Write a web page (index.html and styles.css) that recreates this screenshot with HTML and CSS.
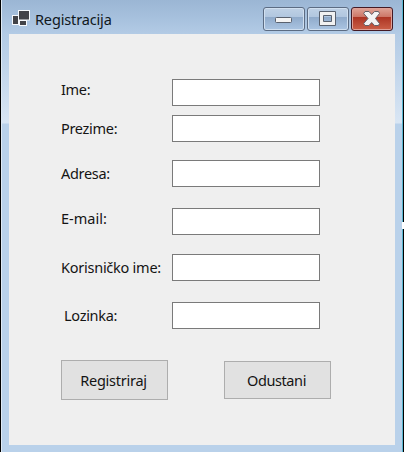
FILE: index.html
```html
<!DOCTYPE html>
<html lang="hr">
<head>
<meta charset="utf-8">
<title>Registracija</title>
<link rel="stylesheet" href="styles.css">
</head>
<body>
<div class="window">
  <header class="titlebar">
    <svg class="app-icon" width="18" height="17" viewBox="0 0 18 17">
      <g fill="#424348" stroke="#f5f8fb" stroke-width="1">
        <rect x=".5" y="5.500" width="6" height="9"/>
        <rect x="7.5" y="10.500" width="7" height="5"/>
        <rect x="6.500" y=".5" width="11" height="9.500"/>
      </g>
    </svg>
    <h1 class="title">Registracija</h1>
    <div class="controls">
      <button class="control" aria-label="Minimize">
        <svg width="18" height="18" viewBox="0 0 18 18"><rect x=".5" y="7.500" width="16" height="5" rx="1" fill="#f3f3f3" stroke="#59616e"/></svg>
      </button>
      <button class="control" aria-label="Maximize">
        <svg width="18" height="18" viewBox="0 0 18 18"><path d="M.5 1.500h16v14h-16zM4.500 5.500v6h8v-6z" fill="#f1f1f1" fill-rule="evenodd" stroke="#59616e"/></svg>
      </button>
      <button class="control close" aria-label="Close">
        <svg width="18" height="18" viewBox="0 0 18 18"><path d="M2 1.500h4L8.700 4.500 11.500 1.500H15.500L16.500 3.500 12.500 8.500 16.500 13.500 15.500 15.500H11.500L8.700 12.500 6 15.500H2L.7 13.500 5 8.500.7 3.500z" fill="#f3f3f3" stroke="#656067"/></svg>
      </button>
    </div>
  </header>
  <main class="client">
    <form class="form">
      <div class="row"><label class="label ime" for="ime">Ime:</label><input class="field" id="ime"></div>
      <div class="row prezime"><label class="label" for="prezime">Prezime:</label><input class="field" id="prezime"></div>
      <div class="row adresa"><label class="label" for="adresa">Adresa:</label><input class="field" id="adresa"></div>
      <div class="row email"><label class="label" for="email">E-mail:</label><input class="field" id="email"></div>
      <div class="row username"><label class="label" for="username">Korisničko ime:</label><input class="field" id="username"></div>
      <div class="row password"><label class="label" for="password">Lozinka:</label><input class="field" id="password" type="password"></div>
      <div class="actions">
        <button class="action submit" type="button">Registriraj</button>
        <button class="action cancel" type="button">Odustani</button>
      </div>
    </form>
  </main>
  <span class="edge-mark"></span>
</div>
</body>
</html>
```

FILE: styles.css
```css
* { box-sizing: border-box; }

body {
  margin: 0;
  overflow: hidden;
  font-family: "Noto Sans", "Open Sans", sans-serif;
  font-size: 14.5px;
  color: #141414;
}

.window {
  position: relative;
  width: 404px;
  height: 452px;
  padding: 0 7px 7px;
  border-left: 1px solid #000;
  border-right: 1px solid #000;
  box-shadow: inset 1px 0 #dfeaf5, inset -1px 0 #58b6d0;
  background: linear-gradient(#9bb6d4 0, #a8c2de 20px, #b3cbe5 34px, #bdd2e9 60px, #d9e6f4 123px, #b9d1ea 124px);
}

.titlebar {
  display: flex;
  height: 34px;
  padding: 7px 3px 0 4px;
}

.app-icon { margin-top: 3px; }

.title {
  margin: 1px 0 0 5px;
  font-size: 14.5px;
  font-weight: 400;
  line-height: 23px;
  letter-spacing: -.15px;
  color: #101820;
}

.controls {
  display: flex;
  gap: 2px;
  margin-left: auto;
}

.control {
  display: grid;
  place-items: center;
  width: 42px;
  height: 24px;
  padding: 0;
  border: 1px solid #5c6c83;
  border-radius: 3px;
  box-shadow: inset 0 0 0 1px #d1e0f0;
  background: linear-gradient(#bfd1e5 0, #b0c6df 42%, #90abcb 43%, #abc5e2 100%);
}

.close {
  border-color: #441a24;
  box-shadow: inset 0 0 0 1px #dfa198;
  background: linear-gradient(#dfa497 0, #cc7465 42%, #ad3524 43%, #cb6048 100%);
}

.client {
  width: 386px;
  height: 411px;
  margin-left: 1px;
  padding: 45px 0 0 52px;
  background: #efefef;
}

.row {
  display: grid;
  grid-template-columns: 111px 148px;
  height: 27px;
}

.prezime { margin-top: 9px; }
.adresa { margin-top: 18px; }
.email { margin-top: 21px; }
.username { margin-top: 19px; }
.password { margin-top: 21px; }

.label {
  line-height: 27px;
  letter-spacing: -.3px;
  white-space: nowrap;
}

.ime { line-height: 20px; }
.email .label { line-height: 20px; letter-spacing: 0; }
.username .label { letter-spacing: -.25px; }
.password .label { padding-left: 3px; }

.field {
  width: 148px;
  height: 27px;
  padding: 2px 4px;
  border: 1px solid #7a7a7a;
  border-radius: 0;
  background: #fff;
  font: inherit;
}

.actions {
  display: flex;
  align-items: center;
  gap: 56px;
  margin-top: 31px;
}

.action {
  width: 107px;
  height: 40px;
  padding: 0 2px 0 0;
  border: 1px solid #adadad;
  background: #e1e1e1;
  color: inherit;
  font: inherit;
  letter-spacing: -.25px;
}

.cancel {
  height: 38px;
  letter-spacing: -.4px;
}

.edge-mark {
  position: absolute;
  top: 222px;
  right: -1px;
  width: 2px;
  height: 7px;
  background: #fff;
}
```
